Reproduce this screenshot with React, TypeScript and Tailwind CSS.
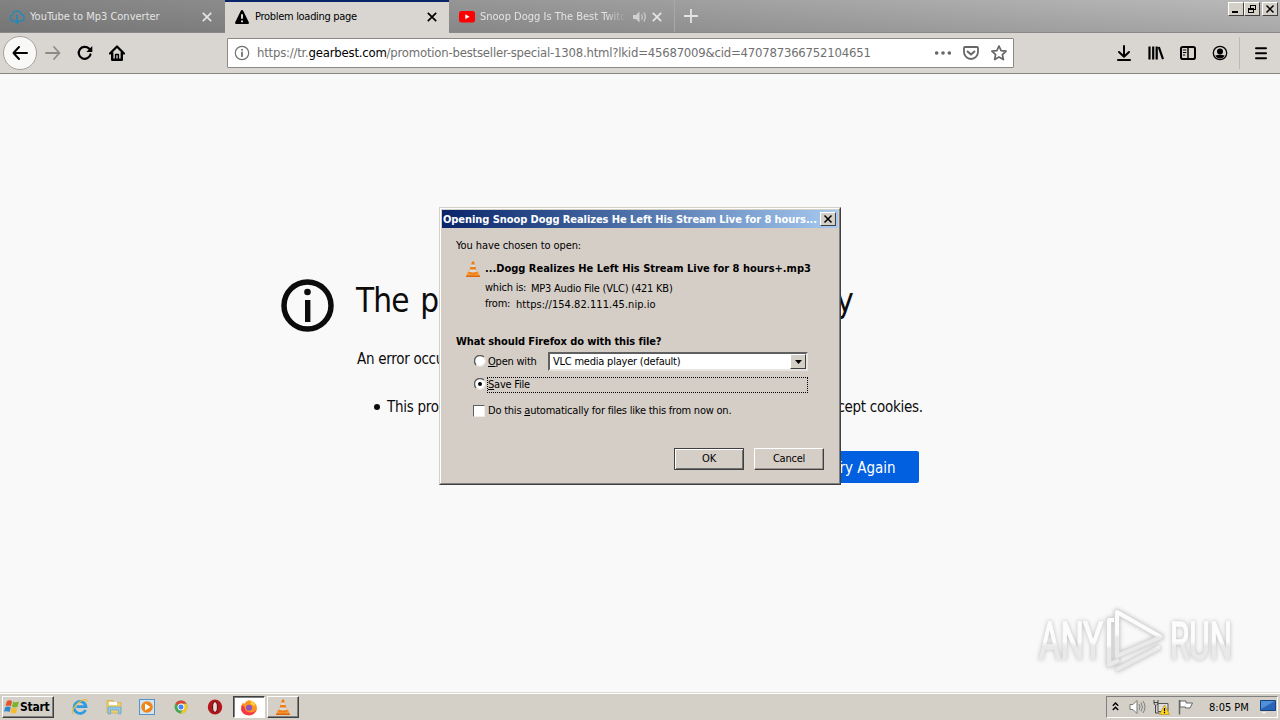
import type { ReactNode } from 'react'

// ─── Toolbar icons ────────────────────────────────────────────────────────────

function Icon({ children, className = '' }: { children: ReactNode; className?: string }) {
  return (
    <svg viewBox="0 0 16 16" className={`w-4 h-4 flex-shrink-0 ${className}`} fill="none" stroke="currentColor" strokeWidth="2" strokeLinecap="round" strokeLinejoin="round">
      {children}
    </svg>
  )
}

function CloseIcon({ className = '' }: { className?: string }) {
  return (
    <svg viewBox="0 0 10 10" className={`w-2.5 h-2.5 flex-shrink-0 ${className}`} stroke="currentColor" strokeWidth="1.7">
      <path d="M.8.8l8.4 8.4M9.2.8L.8 9.2" />
    </svg>
  )
}

function ConeIcon({ className = '' }: { className?: string }) {
  return (
    <svg viewBox="0 0 16 16" className={`w-4 h-4 flex-shrink-0 ${className}`}>
      <path d="M3 10.500h10l1.800 5H1.200z" fill="#f39a35" />
      <path d="M1 14.500h14V16H1z" fill="#e0650c" />
      <path d="M7 .5h2l3.400 12q-4.400 2-8.800 0z" fill="#ef7d16" />
      <path d="M6.200 3.400h3.600l.8 2.600H5.400zM4.700 8.400h6.600l.7 2.400q-4 1.400-8 0z" fill="#dedcd9" />
    </svg>
  )
}

// ─── Tab strip ────────────────────────────────────────────────────────────────

function CaptionButton({ children }: { children: ReactNode }) {
  return (
    <span className="w-4 h-3.5 flex-shrink-0 flex items-center justify-center bg-[#d4d0c8] border border-t-white border-l-white border-b-[#404040] border-r-[#404040]">
      <svg viewBox="0 0 12 10" className="w-3 h-2.5" fill="none" stroke="#000" shapeRendering="crispEdges">
        {children}
      </svg>
    </span>
  )
}

function TabStrip() {
  return (
    <div className="h-[33px] flex bg-linear-to-r from-[#828282] to-[#bababa] text-[11px]">
      <div className="flex w-full bg-linear-to-b from-transparent to-black/10 border-b border-[#8a8a8a]">
        <div className="w-[225px] h-8 flex items-center pt-px pl-[9px] pr-[13px] text-[#e4e4e4]">
          <svg viewBox="0 0 16 16" className="w-4 h-4 flex-shrink-0" fill="none" stroke="#2488b8" strokeWidth="1.3">
            <path d="M5 12H3.8A3.1 3.1 0 0 1 3.4 6 4.7 4.7 0 0 1 12.5 5.5 3.3 3.3 0 0 1 12.400 12H11" />
            <path d="M8 6v8M5.500 11.500L8 14l2.500-2.500" strokeWidth="1.700" />
          </svg>
          <span className="ml-[5px] pt-px flex-1 whitespace-nowrap">YouTube to Mp3 Converter</span>
          <CloseIcon />
        </div>
        <div className="w-[224px] h-[33px] flex items-center pl-2.5 pr-3 bg-[#d9d6d2] shadow-[inset_0_2px_#0a246a] text-black">
          <svg viewBox="0 0 14 14" className="w-3.5 h-3.5 flex-shrink-0">
            <path d="M7 0q.9 0 1.300.9l5.500 11.300Q14.300 14 12.800 14H1.200Q-.3 14 .2 12.200L5.700.9Q6.100 0 7 0z" fill="#000" />
            <path d="M7 4.300v4.400M7 10.400v1.800" stroke="#fff" strokeWidth="1.700" />
          </svg>
          <span className="ml-[6px] pt-px flex-1 whitespace-nowrap tracking-[-0.3px]">Problem loading page</span>
          <CloseIcon />
        </div>
        <div className="w-[226px] h-8 flex items-center pt-px pl-2.5 pr-[11px] text-[#e4e4e4] border-r border-[#a8a8a8]">
          <svg viewBox="0 0 16 12" className="w-4 h-3 flex-shrink-0">
            <rect width="16" height="11.500" rx="2.500" fill="#f00" />
            <path d="M6.300 3.200v5l4.300-2.500z" fill="#fff" />
          </svg>
          <span className="ml-[5px] pt-px w-[147px] overflow-hidden whitespace-nowrap mask-r-from-85% mask-r-to-100%">Snoop Dogg Is The Best Twitch</span>
          <svg viewBox="0 0 14 12" className="ml-[6px] mr-[5px] w-3.5 h-3 flex-shrink-0" fill="none" stroke="#d0d0d0" strokeWidth="1.200">
            <path d="M0 4h3l3.500-3.500v11L3 8H0z" fill="#d0d0d0" stroke="none" />
            <path d="M8.500 3.500q1.600 2.500 0 5M10.800 1.500q3 4.500 0 9" />
          </svg>
          <CloseIcon />
        </div>
        <svg viewBox="0 0 14 14" className="w-3.5 h-3.5 mt-[9px] ml-[9px]" stroke="#e4e4e4" strokeWidth="1.800">
          <path d="M7 0v14M0 7h14" />
        </svg>
        <div className="ml-auto mt-[2px] mr-[2px] flex h-3.5">
          <CaptionButton><path d="M2 8h6" strokeWidth="2" /></CaptionButton>
          <CaptionButton><path d="M4.500 4V1.500h5v4H8M4 1.500h6M2.500 4.500h5v4h-5zM2 5h6" /></CaptionButton>
          <span className="w-[2px]" />
          <CaptionButton><path d="M2.500 1.500l7 7M9.500 1.500l-7 7" strokeWidth="1.500" shapeRendering="auto" /></CaptionButton>
        </div>
      </div>
    </div>
  )
}

// ─── Navigation bar ───────────────────────────────────────────────────────────

function NavBar() {
  return (
    <div className="h-[41px] flex items-center bg-[#d9d6d2] border-b border-[#868481] text-black">
      <span className="ml-[3px] w-[34px] h-[34px] rounded-full bg-[#f8f8f7] border border-[#a5a29e] flex items-center justify-center">
        <Icon><path d="M15 8H1.500M7 2L1.500 8 7 14" /></Icon>
      </span>
      <Icon className="ml-2 text-[#8d8b88]"><path d="M1 8h13.500M9 2l5.500 6L9 14" strokeWidth="1.800" /></Icon>
      <Icon className="ml-4">
        <path d="M13.500 9.500A6 6 0 1 1 12 3.600l1 1" strokeWidth="2.200" />
        <path d="M15.300 1v6H9.300z" fill="#000" stroke="none" />
      </Icon>
      <Icon className="ml-4">
        <path d="M1 8.500L8 1.500l7 7" strokeWidth="2.200" />
        <path d="M3.200 8v6.700h9.600V8" strokeWidth="2.400" />
        <path d="M6.600 14V9.500h2.800V14" strokeWidth="1.500" />
      </Icon>

      <div className="ml-[102px] w-[787px] h-[30px] flex items-center bg-white border border-[#8d8a85] rounded-[1px]">
        <Icon className="ml-1.5 text-[#717171]">
          <circle cx="8" cy="8" r="6.700" strokeWidth="1.200" />
          <path d="M8 7.500v3.700M8 4.700v.2" strokeWidth="1.800" />
        </Icon>
        <span className="ml-[7px] flex-1 text-[13px] tracking-[-0.21px] whitespace-nowrap text-[#707070]">
          https://tr.<span className="text-black">gearbest.com</span>/promotion-bestseller-special-1308.html?lkid=45687009&amp;cid=470787366752104651
        </span>
        <Icon className="text-[#666]">
          <g fill="currentColor" stroke="none">
            <circle cx="1.700" cy="8" r="1.800" /><circle cx="8" cy="8" r="1.800" /><circle cx="14.300" cy="8" r="1.800" />
          </g>
        </Icon>
        <Icon className="ml-3 text-[#666]">
          <path d="M2 2h12q1 0 1 1v4a7 7 0 0 1-14 0V3q0-1 1-1z" strokeWidth="1.800" />
          <path d="M4.600 6.500L8 9.600l3.400-3.100" />
        </Icon>
        <Icon className="ml-3 mr-1.5 text-[#666]">
          <path d="M8 1l2.100 4.600 5 .6-3.700 3.400 1 5L8 12.100l-4.400 2.500 1-5L.9 6.200l5-.6z" strokeWidth="1.700" />
        </Icon>
      </div>

      <Icon className="ml-[102px]"><path d="M8 1v10.500M3 7l5 4.700L13 7M2 15h12" /></Icon>
      <Icon className="ml-4"><path d="M1.500 1.500v13M5.200 1.500v13M8.700 1.500v13M10.800 2l4.200 12.200" strokeWidth="2.200" strokeLinecap="butt" /></Icon>
      <Icon className="ml-4">
        <rect x="1" y="2" width="14" height="12" rx="1.800" />
        <path d="M8 2v12" strokeWidth="1.500" />
        <path d="M3.300 5h2.600M3.300 7.500h2.600M3.300 10h1.600" strokeWidth="1" />
      </Icon>
      <Icon className="ml-4">
        <circle cx="8" cy="8" r="6.700" strokeWidth="1.300" />
        <circle cx="8" cy="6.400" r="3" fill="#000" stroke="none" />
        <path d="M3.300 10.500q4.700-1.500 9.400 0-1.500 3-4.700 3t-4.700-3z" fill="#000" stroke="none" />
      </Icon>
      <span className="ml-[11px] w-px h-8 bg-[#bdb9b4]" />
      <Icon className="ml-[13px]"><path d="M3 3.300h10M3 8.300h10M3 13.300h10" /></Icon>
    </div>
  )
}

// ─── Error page ───────────────────────────────────────────────────────────────

function ErrorPage() {
  return (
    <main className="h-[618px] bg-[#f9f9fa] text-[#0c0c0d] text-[15px] tracking-[-0.28px] whitespace-nowrap flex pt-[205px] pl-[281px]">
      <svg viewBox="0 0 53 53" className="w-[53px] h-[53px] flex-shrink-0">
        <circle cx="26.500" cy="26.500" r="23.500" fill="none" stroke="#0c0c0d" strokeWidth="5.500" />
        <circle cx="26.500" cy="13" r="3.300" fill="#0c0c0d" />
        <path d="M24 21h5.400v22H24z" fill="#0c0c0d" />
      </svg>
      <div className="ml-[22px] w-[563px]">
        <h1 className="h-[43px] pt-px leading-[42px] text-[33px] tracking-[-0.85px] [word-spacing:3px]">The page isn’t redirecting properly</h1>
        <p className="mt-[26px] pl-px leading-[22px]">An error occurred during a connection to tr.gearbest.com.</p>
        <div className="mt-[26px] flex items-center leading-[22px]">
          <span className="ml-[18px] mr-[7px] w-1.5 h-1.5 flex-shrink-0 rounded-full bg-[#0c0c0d]" />
          <span>This problem can sometimes be caused by disabling or refusing to accept cookies.</span>
        </div>
        <button className="mt-[33px] ml-auto block w-[112px] h-8 pt-[2px] pl-[3px] rounded-[2px] bg-[#0060df] text-white tracking-normal">Try Again</button>
      </div>
    </main>
  )
}

// ─── Download dialog ──────────────────────────────────────────────────────────

function Radio({ checked }: { checked?: boolean }) {
  return (
    <svg viewBox="0 0 12 12" className="w-3 h-3 flex-shrink-0 mb-[2px]">
      <circle cx="6" cy="6" r="5" fill="#fff" />
      <path d="M2.100 9.900A5.500 5.500 0 0 1 9.900 2.100" fill="none" stroke="#606060" strokeWidth="1.400" />
      <path d="M9.900 2.100A5.500 5.500 0 0 1 2.100 9.900" fill="none" stroke="#e8e5e0" />
      {checked && <circle cx="6" cy="6" r="2" fill="#000" />}
    </svg>
  )
}

function DownloadDialog() {
  return (
    <div className="absolute left-[439px] top-[207px] w-[402px] h-[278px] bg-[#d5cec7] border border-t-[#d4d0c8] border-l-[#d4d0c8] border-b-[#404040] border-r-[#404040] text-[11px] leading-[14px] tracking-[-0.22px] text-black whitespace-nowrap">
      <div className="w-full h-full border border-t-white border-l-white border-b-[#808080] border-r-[#808080] p-px">
        <div className="h-[18px] flex items-center bg-linear-to-r from-[#0a246a] to-[#a6caf0] pl-px pr-[2px]">
          <span className="flex-1 pt-px text-white font-bold tracking-[-0.07px]">Opening Snoop Dogg Realizes He Left His Stream Live for 8 hours...</span>
          <CaptionButton><path d="M2.500 1.500l7 7M9.500 1.500l-7 7" strokeWidth="1.500" shapeRendering="auto" /></CaptionButton>
        </div>

        <div className="pl-[14px] pt-[11px]">
          <p className="tracking-[-0.08px]">You have chosen to open:</p>
          <div className="mt-[8px] ml-[9px] flex items-center h-4">
            <ConeIcon />
            <span className="ml-[4px] font-bold tracking-[-0.01px]">...Dogg Realizes He Left His Stream Live for 8 hours+.mp3</span>
          </div>
          <p className="mt-[4px] ml-[29px] flex"><span className="w-[46px]">which is:</span><span className="pt-px">MP3 Audio File (VLC) (421 KB)</span></p>
          <p className="mt-px ml-[29px] flex"><span className="w-[31px]">from:</span><span className="pt-px tracking-[0.05px]">https://154.82.111.45.nip.io</span></p>

          <p className="mt-[23px] font-bold tracking-[-0.1px]">What should Firefox do with this file?</p>
          <div className="mt-[3px] ml-[18px] flex items-center h-[19px]">
            <Radio />
            <span className="ml-[2px] pt-px w-[60px]"><u>O</u>pen with</span>
            <div className="w-[260px] h-[19px] flex items-center bg-white border-2 border-t-[#606060] border-l-[#606060] border-b-[#e8e5e0] border-r-[#e8e5e0] pl-[3px]">
              <span className="flex-1 pt-px">VLC media player (default)</span>
              <span className="w-4 h-[15px] flex items-center justify-center bg-[#d4d0c8] border border-t-white border-l-white border-b-[#404040] border-r-[#404040]">
                <svg viewBox="0 0 7 4" className="w-[7px] h-1"><path d="M0 0h7L3.500 4z" /></svg>
              </span>
            </div>
          </div>
          <div className="mt-[6px] ml-[18px] flex items-center h-4">
            <Radio checked />
            <span className="ml-px w-[321px] h-4 border border-dotted border-black"><u>S</u>ave File</span>
          </div>
          <div className="mt-[10px] ml-[17px] flex items-center h-4">
            <span className="w-3 h-3 mb-px bg-white border border-t-[#606060] border-l-[#606060] border-b-[#eee] border-r-[#eee]" />
            <span className="ml-[3px]">Do this <u>a</u>utomatically for files like this from now on.</span>
          </div>
        </div>

        <div className="mt-[29px] flex justify-end gap-[10px] pr-[14px]">
          <span className="w-[70px] h-[22px] flex items-center justify-center border border-[#404040] shadow-[inset_1px_1px_#fff,inset_-1px_-1px_#707070]">OK</span>
          <span className="w-[70px] h-[22px] flex items-center justify-center border border-t-white border-l-white border-b-[#404040] border-r-[#404040] shadow-[inset_-1px_-1px_#999590]">Cancel</span>
        </div>
      </div>
    </div>
  )
}

// ─── Watermark ────────────────────────────────────────────────────────────────

function Watermark() {
  return (
    <svg viewBox="0 0 204 70" className="absolute left-[1034px] top-[605px] w-[204px] h-[70px] drop-shadow-[0_0_2px_#bbb]">
      <defs>
        <linearGradient id="glass" x1="0" y1="0" x2="0" y2="1">
          <stop offset="50%" stopColor="#fcfcfc" />
          <stop offset="58%" stopColor="#e9e9e9" />
        </linearGradient>
      </defs>
      <g fill="url(#glass)" stroke="url(#glass)" strokeWidth="1.600" fontFamily="Liberation Sans Narrow, Roboto, sans-serif" fontSize="51">
        <text x="5" y="54" textLength="64" lengthAdjust="spacingAndGlyphs">ANY</text>
        <text x="136" y="54" textLength="62" lengthAdjust="spacingAndGlyphs">RUN</text>
      </g>
      <g fill="none" stroke="#dadada" strokeWidth="5.500" strokeLinejoin="round">
        <path d="M83 7v44l44-19z" />
        <path d="M80 15h-5v45l10-5M82 65l44-23" />
      </g>
      <g fill="none" stroke="url(#glass)" strokeWidth="4" strokeLinejoin="round">
        <path d="M83 7v44l44-19z" />
        <path d="M80 15h-5v45l10-5M82 65l44-23" />
      </g>
    </svg>
  )
}

// ─── Taskbar ──────────────────────────────────────────────────────────────────

function Taskbar() {
  return (
    <div className="h-7 flex items-center bg-[#d4d0c8] border-t border-[#dedbd5] shadow-[inset_0_1px_#fff] text-[11px] text-black pt-[3px] pb-[2px]">
      <div className="ml-[2px] w-[52px] h-[22px] flex items-center border border-t-white border-l-white border-b-[#404040] border-r-[#404040] font-bold shadow-[inset_-1px_-1px_#808080]">
        <svg viewBox="0 0 16 16" className="w-4 h-4 flex-shrink-0 ml-px">
          <path d="M3 2q3-1.500 5 .3L7 7.300Q4.500 6 1.500 7z" fill="#e5532a" />
          <path d="M9 2.700q3 1.300 6-.2L13.500 8q-3 1-5.500-.3z" fill="#79b52c" />
          <path d="M1.300 8q3-1.200 5.500.2L5.500 13q-2.500-1.500-5.500-.4z" fill="#2f87d0" />
          <path d="M7.800 8.600q2.500 1.400 5.500.3L12 14q-3 1.200-5.500-.7z" fill="#f6bd24" />
        </svg>
        <span className="text-[12px] tracking-[-0.25px]">Start</span>
      </div>

      <svg viewBox="0 0 18 18" className="ml-[17px] w-[18px] h-[18px]" fill="none">
        <path d="M14.500 12A6 6 0 1 1 15 8.700H5.500" stroke="#2d9be0" strokeWidth="2.700" />
        <path d="M2.500 16C-1 14 5 5 11 2.500q5-2 5.500 1" stroke="#e9bd37" strokeWidth="1.200" />
      </svg>
      <svg viewBox="0 0 18 18" className="ml-[16px] w-[18px] h-[18px]">
        <path d="M2 2.500h6l1 2h7V15H2z" fill="#edcf72" stroke="#cda94b" strokeWidth=".7" />
        <path d="M4 4h8v3H4z" fill="#fff" />
        <path d="M3 9h13v7h-2.500v-4h-8v4H3z" fill="#91c8e9" stroke="#5a9fc8" strokeWidth=".6" />
      </svg>
      <svg viewBox="0 0 18 18" className="ml-[15px] w-[18px] h-[18px]">
        <rect x="1.500" y="1.500" width="15" height="15" fill="#cfe5f5" stroke="#5593c8" />
        <circle cx="9" cy="9" r="5.800" fill="#f08518" />
        <path d="M7 5.500v7L12.500 9z" fill="#fff" />
      </svg>
      <svg viewBox="0 0 18 18" className="ml-[16px] w-[18px] h-[18px]">
        <circle cx="9" cy="9" r="6.500" fill="#4ba654" />
        <path d="M9 9L3.400 5.700A6.500 6.500 0 0 1 14.700 5.800H9z" fill="#dc4437" />
        <path d="M9 5.800h5.700A6.500 6.500 0 0 1 8.600 15.500L11.800 10z" fill="#f3c62d" />
        <circle cx="9" cy="9" r="3.100" fill="#4285f4" stroke="#fff" />
      </svg>
      <svg viewBox="0 0 18 18" className="ml-[16px] w-[18px] h-[18px]">
        <ellipse cx="9" cy="9" rx="7.200" ry="7.500" fill="#b3161b" />
        <ellipse cx="9" cy="9" rx="2.400" ry="5.300" fill="#e8dada" stroke="#5c080b" />
      </svg>
      <span className="ml-[9px] w-8 h-[22px] bg-white border border-t-[#404040] border-l-[#404040] border-b-white border-r-white shadow-[inset_1px_1px_#808080] flex items-center justify-center">
        <svg viewBox="0 0 18 18" className="w-[18px] h-[18px]">
          <path d="M9 2q2.500 1 3 3l1-1.500Q17 6 17 10a8 7.500 0 0 1-16 0q0-3 2-5.500L4 6q2-3 5-4z" fill="#ff9320" />
          <path d="M2 7q-3 8 5 10 7 1 10-6-3 4-7 3.500Q5 14 4.500 9z" fill="#f6364c" />
          <path d="M11 2q1 2-1 4l5 2q1-3-4-6z" fill="#ffd43b" />
          <circle cx="9" cy="9.700" r="3" fill="#8a55c0" />
        </svg>
      </span>
      <span className="ml-[2px] w-8 h-[22px] border border-t-white border-l-white border-b-[#404040] border-r-[#404040] shadow-[inset_-1px_-1px_#808080] flex items-center justify-center">
        <ConeIcon />
      </span>

      <div className="ml-auto mr-[2px] w-[172px] h-[22px] flex items-center border border-t-[#808080] border-l-[#808080] border-b-white border-r-white">
        <svg viewBox="0 0 7 9" className="ml-[5px] mb-[2px] w-[7px] h-[9px]" fill="none" stroke="#000" strokeWidth="1.400">
          <path d="M.8 3.800L3.500 1l2.700 2.800M.8 8L3.500 5.200 6.200 8" />
        </svg>
        <svg viewBox="0 0 17 16" className="ml-[10px] w-[17px] h-4" fill="none" stroke="#777">
          <path d="M1 5.500h3l4-4v13l-4-4H1z" fill="#fff" />
          <path d="M10 5q2 3 0 6M12 3.500q3 4.500 0 9M14 2q4 6 0 12" strokeWidth=".9" />
        </svg>
        <svg viewBox="0 0 17 16" className="ml-[7px] w-[17px] h-4">
          <path d="M5 4.500h10v8H5z" fill="#ddd" stroke="#555" />
          <path d="M1 1v3q0 2 1.500 2v8h4M5 1v3q0 2-1.500 2M1 3.500h4" fill="none" stroke="#444" />
          <path d="M11.500 6l5 9.500h-10z" fill="#ffd51f" stroke="#b08c10" strokeWidth=".6" />
          <path d="M11.500 9v3.200M11.500 13v1.200" stroke="#000" strokeWidth="1.200" />
        </svg>
        <svg viewBox="0 0 17 16" className="ml-[7px] w-[17px] h-4" fill="#fff" stroke="#666">
          <path d="M2.500 1v14.500" strokeWidth="1.500" />
          <path d="M3 2h6v2h6.500l-2.500 5H8.500V8H3z" />
        </svg>
        <span className="ml-[15px] pt-[2px] whitespace-nowrap">8:05 PM</span>
        <svg viewBox="0 0 16 14" className="ml-auto mr-px w-4 h-3.5">
          <path d="M.5.5h15v10H.5z" fill="#2865b8" stroke="#16437e" />
          <path d="M1 1h14L1 9z" fill="#4e91d8" />
          <path d="M2 12h4v1.500H2z" fill="#e9edf2" />
        </svg>
      </div>
    </div>
  )
}

// ─── Screen ───────────────────────────────────────────────────────────────────

export default function App() {
  return (
    <div className="relative w-[1280px] h-[720px] overflow-hidden font-['DejaVu_Sans_Condensed','DejaVu_Sans',sans-serif]">
      <TabStrip />
      <NavBar />
      <ErrorPage />
      <Taskbar />
      <DownloadDialog />
      <Watermark />
    </div>
  )
}
